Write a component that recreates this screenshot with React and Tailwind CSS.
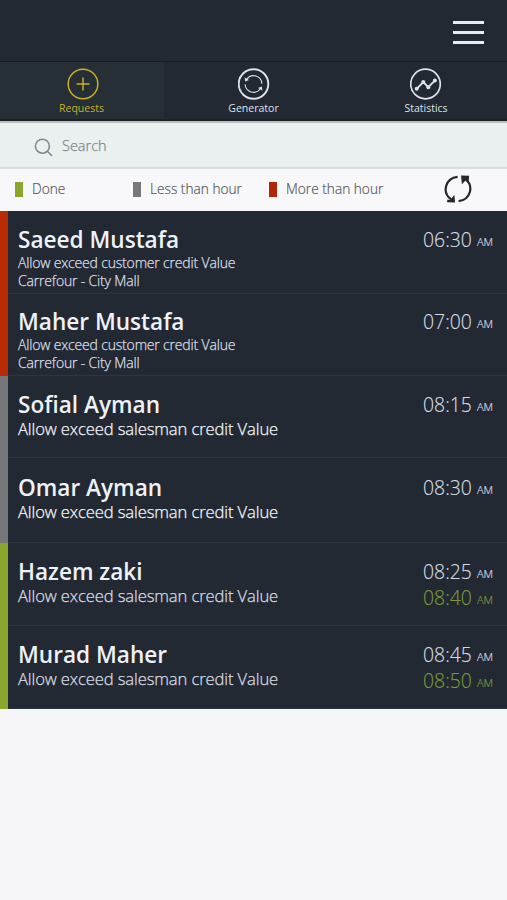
const tabs = [
    { name: 'Requests', icon: PlusIcon, className: 'w-[164px] bg-[#272f36] pr-px text-[#c9ae28]' },
    { name: 'Generator', icon: GeneratorIcon, className: 'w-[179px] text-[#dfe2ea]' },
    { name: 'Statistics', icon: StatisticsIcon, className: 'w-[164px] pl-[2px] text-[#dfe2ea]' },
];

const requests = [
    { name: 'Saeed Mustafa', text: 'Allow exceed customer credit Value', place: 'Carrefour - City Mall', time: '06:30', size: 'h-[83px] pt-[13px]', color: 'border-[#b92b05]' },
    { name: 'Maher Mustafa', text: 'Allow exceed customer credit Value', place: 'Carrefour - City Mall', time: '07:00', size: 'h-[82px] pt-[12px]', color: 'border-[#b92b05]' },
    { name: 'Sofial Ayman', text: 'Allow exceed salesman credit Value', time: '08:15', size: 'h-[82px] pt-[13px]', color: 'border-[#777678]', textColor: 'text-[#f4f6fc]' },
    { name: 'Omar Ayman', text: 'Allow exceed salesman credit Value', time: '08:30', size: 'h-[85px] pt-[14px]', color: 'border-[#777678]', textColor: 'text-[#f4f6fc]' },
    { name: 'Hazem zaki', text: 'Allow exceed salesman credit Value', time: '08:25', doneTime: '08:40', size: 'h-[83px] pt-[13px]', color: 'border-[#8ca62d]', textColor: 'text-[#d9dce4]' },
    { name: 'Murad Maher', text: 'Allow exceed salesman credit Value', time: '08:45', doneTime: '08:50', size: 'h-[83px] pt-[13px]', color: 'border-[#8ca62d]', textColor: 'text-[#d9dce4]' },
];

function PlusIcon() {
    return (
        <svg className="ml-[3px]" width="32" height="32" viewBox="0 0 32 32" fill="none" stroke="currentColor" strokeWidth="1.5">
            <circle cx="16" cy="16" r="14.8" />
            <path d="M16 9.5v13M9.5 16h13" />
        </svg>
    );
}

function GeneratorIcon() {
    return (
        <svg width="32" height="32" viewBox="0 0 32 32" fill="none" stroke="currentColor">
            <circle cx="15.5" cy="16" r="14.8" strokeWidth="1.9" />
            <path d="M8.7 11.2A8.4 8.4 0 0 1 23.9 15.7M22.3 20.8A8.4 8.4 0 0 1 7.1 16.3" strokeWidth="1.1" />
            <path d="M6.6 9.4l.6 4.2 3.8-1.7zM24.4 22.6l-.6-4.2-3.8 1.7z" fill="currentColor" stroke="none" />
        </svg>
    );
}

function StatisticsIcon() {
    return (
        <svg width="32" height="32" viewBox="0 0 32 32" fill="none" stroke="currentColor">
            <circle cx="15.5" cy="16" r="14.8" strokeWidth="1.7" />
            <path d="M6.7 20.8L13.3 14l5 5.2 6.8-6.8" strokeWidth="1.9" />
            <g fill="currentColor" stroke="none">
                <circle cx="6.7" cy="20.8" r="2" />
                <circle cx="13.3" cy="14" r="2" />
                <circle cx="18.3" cy="19.2" r="2" />
                <circle cx="24.9" cy="12.4" r="2" />
            </g>
        </svg>
    );
}

function RefreshIcon() {
    return (
        <svg className="mb-[2px]" width="28" height="28" viewBox="0 0 28 28" fill="none" stroke="#25282b" strokeWidth="2.2">
            <path d="M13.6 1.9C1.5 3.2-2.6 17.3 7.2 24.3M14.6 26.1C26.6 24.6 30.6 10.6 20.6 3.7" />
            <path d="M17 .5l8.1.3-.4 6.2-2.3-2.4-4.5 4.6zM11.1 27.6L3 27.3l.4-2.6 3 .1 4-5z" fill="#25282b" stroke="none" />
        </svg>
    );
}

function Legend({ color, label, className }) {
    return (
        <div className={`flex items-center ${className}`}>
            <span className={`h-[15px] w-[8px] ${color}`}></span>
            <span className="mb-px ml-[9px] whitespace-nowrap">{label}</span>
        </div>
    );
}

function Time({ value, className }) {
    return (
        <div className={`flex h-[26px] justify-between leading-[26px] font-light ${className}`}>
            <span className="text-[19.4px] [-webkit-text-stroke:0.15px]">{value}</span>
            <span className="pt-[2px] text-[11px] [-webkit-text-stroke:0.2px]">AM</span>
        </div>
    );
}

function RequestRow({ item }) {
    return (
        <li className={`flex justify-between border-l-8 bg-[#222932] pr-[14px] pl-[10px] ${item.size} ${item.color} shadow-[inset_0_-1px_#2d353e]`}>
            <div className="whitespace-nowrap text-[#eff1f8]">
                <h2 className="text-[22.6px] leading-[32px] font-semibold">{item.name}</h2>
                {item.place ? (
                    <div className="-mt-[2px] text-[14px] leading-[18px] font-light tracking-[-0.17px] text-[#dcdfe6] [-webkit-text-stroke:0.25px]">
                        <p>{item.text}</p>
                        <p>{item.place}</p>
                    </div>
                ) : (
                    <p className={`-mt-px text-[16.6px] leading-[18px] font-light tracking-[-0.11px] [-webkit-text-stroke:0.25px] ${item.textColor}`}>{item.text}</p>
                )}
            </div>
            <div className="w-[70px] pt-[3px]">
                <Time value={item.time} className="text-[#d7dae3]" />
                {item.doneTime && <Time value={item.doneTime} className="text-[#7b9838]" />}
            </div>
        </li>
    );
}

function App() {
    return (
        <div className="h-[900px] w-[507px] overflow-hidden bg-[#f6f6f9] font-['Open_Sans',sans-serif]">
            <header className="flex h-[61px] items-start justify-end bg-[#222932] pt-[21px] pr-[23px]">
                <button className="flex w-[31px] flex-col gap-[7px]">
                    <span className="h-[3px] w-full bg-[#e9ebf2]"></span>
                    <span className="h-[3px] w-full bg-[#e9ebf2]"></span>
                    <span className="h-[3px] w-full bg-[#e9ebf2]"></span>
                </button>
            </header>

            <nav className="flex h-[60px] border-t border-b-2 border-t-[#171d26] border-b-[#1b2127] bg-[#222932]">
                {tabs.map(({ name, icon: Icon, className }) => (
                    <button key={name} className={`flex flex-col items-center pt-[6px] ${className}`}>
                        <Icon />
                        <span className="mt-px text-[10.5px] leading-[14px]">{name}</span>
                    </button>
                ))}
            </nav>

            <div className="flex h-[48px] items-center border-t-2 border-b-2 border-t-[#b9bdbe] border-b-[#dadddd] bg-[#eaeff0] pt-[2px] pl-[34px] text-[#83888a]">
                <svg className="mt-[3px]" width="19" height="19" viewBox="0 0 19 19" fill="none" stroke="#83898c" strokeWidth="1.6">
                    <circle cx="8.4" cy="8.2" r="7" />
                    <path d="M13.4 13.2l4.6 4.8" />
                </svg>
                <span className="ml-[9px] text-[14.5px] font-light [-webkit-text-stroke:0.25px]">Search</span>
            </div>

            <div className="flex h-[42px] items-center bg-[#f8f8fa] pl-[15px] text-[13.7px] font-light text-[#57595c] [-webkit-text-stroke:0.2px]">
                <Legend color="bg-[#8ca62d]" label="Done" className="w-[118px]" />
                <Legend color="bg-[#777678]" label="Less than hour" className="w-[136px]" />
                <Legend color="bg-[#b02806]" label="More than hour" className="w-[175px]" />
                <RefreshIcon />
            </div>

            <ul>
                {requests.map((item) => (
                    <RequestRow key={item.name} item={item} />
                ))}
            </ul>
        </div>
    );
}

export default App;
